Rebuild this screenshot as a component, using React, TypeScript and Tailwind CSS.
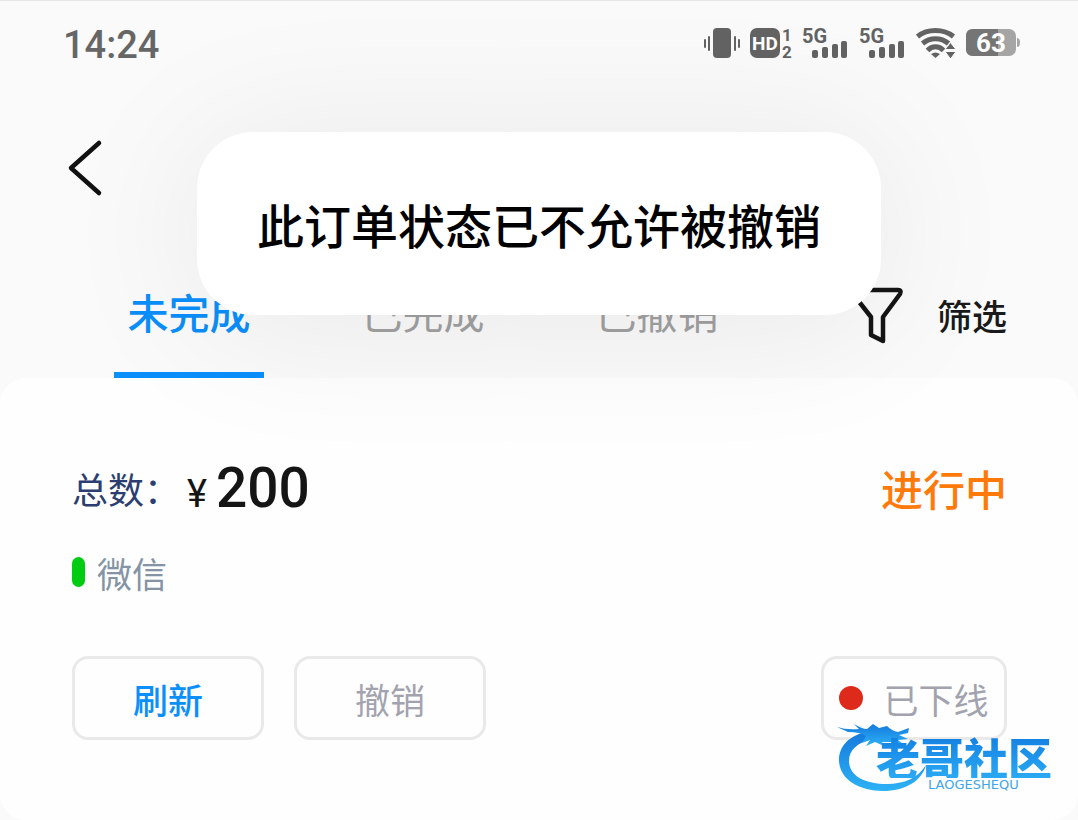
import React, { useState } from "react";

function VibrateIcon() {
  return (
    <svg width="36" height="30" viewBox="0 0 36 30" fill="#636363">
      <rect x="9" y="0" width="18" height="30" rx="4" />
      <rect x="4" y="8" width="2" height="15" rx="1" />
      <rect x="0" y="11" width="2" height="9" rx="1" />
      <rect x="30" y="8" width="2" height="15" rx="1" />
      <rect x="34" y="11" width="2" height="9" rx="1" />
    </svg>
  );
}

function HdIcon() {
  return (
    <svg
      width="44"
      height="30"
      viewBox="0 0 44 30"
      fill="#636363"
      className="overflow-visible font-['Roboto',sans-serif] font-bold"
    >
      <rect width="30" height="30" rx="7" />
      <text x="15" y="22" fontSize="19" fill="#fff" textAnchor="middle">
        HD
      </text>
      <text x="37" y="13" fontSize="17" textAnchor="middle">
        1
      </text>
      <text x="37" y="30" fontSize="17" textAnchor="middle">
        2
      </text>
    </svg>
  );
}

function SignalIcon() {
  return (
    <svg
      width="45"
      height="30"
      viewBox="0 0 45 30"
      fill="#636363"
      className="overflow-visible font-['Roboto',sans-serif] font-bold"
    >
      <text x="-2" y="15" fontSize="20">
        5G
      </text>
      <rect x="8" y="22" width="6" height="8" rx="2" />
      <rect x="18" y="19" width="6" height="11" rx="2" />
      <rect x="28" y="16" width="6" height="14" rx="2" />
      <rect x="37" y="13" width="6" height="17" rx="2" />
    </svg>
  );
}

function WifiIcon() {
  return (
    <svg width="40" height="30" viewBox="0 0 40 30" fill="none">
      <g stroke="#636363" strokeWidth="5">
        <path d="M1.500 8.500C11.500 0.500 27.500 0.500 37.500 8.500" />
        <path d="M6.500 15.500C14 9 25 9 32.500 15.500" />
        <path d="M11.500 22.500C16 17.600 23 17.600 27.500 22.500" />
      </g>
      <path d="M15 26Q19.500 22.800 24 26L19.500 30Z" fill="#636363" />
      <path
        d="M34.500 14.500L40 21.500H29ZM34.500 31L29 23.500H40Z"
        fill="#636363"
        stroke="#fafafa"
        strokeWidth="1"
      />
    </svg>
  );
}

function BatteryIcon() {
  return (
    <svg
      width="54"
      height="28"
      viewBox="0 0 54 28"
      className="font-['Roboto',sans-serif] font-bold"
    >
      <rect x="0" y="0" width="50" height="27" rx="7" fill="#a5a5a5" />
      <path d="M7 0H32V27H7Q0 27 0 20V7Q0 0 7 0Z" fill="#757575" />
      <path d="M51 9Q54 9 54 13.500Q54 18 51 18Z" fill="#a5a5a5" />
      <text x="25" y="23" fontSize="26" fill="#fff" textAnchor="middle">
        63
      </text>
    </svg>
  );
}

function StatusBar() {
  return (
    <div className="flex h-[84px] items-center justify-between pr-[58px] pl-[63px]">
      <span className="pt-[4px] font-['Roboto',sans-serif] text-[38px] leading-none font-medium text-[#666]">
        14:24
      </span>
      <div className="flex items-center gap-[10px]">
        <VibrateIcon />
        <HdIcon />
        <div className="flex gap-[12px]">
          <SignalIcon />
          <SignalIcon />
        </div>
        <WifiIcon />
        <BatteryIcon />
      </div>
    </div>
  );
}

function FilterIcon() {
  return (
    <svg
      width="56"
      height="58"
      viewBox="0 0 56 58"
      fill="none"
      stroke="#151515"
      strokeWidth="4.5"
      strokeLinejoin="round"
    >
      <path d="M7 4H50Q54 4 52 8L35 31V55L23 49V31L5 8Q3 4 7 4Z" />
    </svg>
  );
}

const tabs = ["未完成", "已完成", "已撤销"];

function Tabs() {
  const [active, setActive] = useState("未完成");

  return (
    <div className="flex h-[130px] items-stretch justify-between pr-[71px] pl-[114px]">
      <div className="flex gap-[84px]">
        {tabs.map((tab) => (
          <button
            key={tab}
            onClick={() => setActive(tab)}
            className={`w-[150px] border-b-[6px] pt-[3px] text-[41px] leading-none ${
              tab === active
                ? "border-[#0a8ffb] font-medium text-[#0a8ffb]"
                : "border-transparent text-[#a0a0a0]"
            }`}
          >
            {tab}
          </button>
        ))}
      </div>
      <button className="flex items-center gap-[33px] pt-[3px] text-[35px] leading-none font-medium text-[#1a1a1a]">
        <FilterIcon />
        筛选
      </button>
    </div>
  );
}

function Watermark() {
  return (
    <div className="pointer-events-none absolute top-[337px] right-[18px] h-[85px] w-[230px]">
      <svg
        width="110"
        height="85"
        viewBox="0 0 110 85"
        className="absolute top-0 left-0"
      >
        <defs>
          <linearGradient id="dragon" x1="0" y1="0" x2="0" y2="1">
            <stop offset="0" stopColor="#1479dd" />
            <stop offset="1" stopColor="#2db2f6" />
          </linearGradient>
        </defs>
        <g fill="url(#dragon)">
          <path d="M36 17C18 21 9 32 9 45C9 64 29 76 53 76C75 76 92 66 96 50C88 63 74 69 57 69C35 69 19 61 19 46C19 35 27 28 42 24Z" />
          <path d="M7 12Q16 15 29 14L24 9Q32 14 37 14L43 9L49 13L57 11Q62 16 68 17L79 13L78 18L69 20L78 24L68 25L73 29L62 27L52 27L54 31L45 27L36 31L40 25L32 28L36 21Q30 17 18 17Z" />
        </g>
      </svg>
      <div className="relative flex flex-col pt-[21px] pl-[46px]">
        <span className="bg-linear-to-b from-[#1580e2] to-[#2aa9f3] bg-clip-text text-[44px] leading-[42px] font-black whitespace-nowrap text-transparent">
          老哥社区
        </span>
        <span className="pl-[52px] font-['DejaVu_Sans',sans-serif] text-[13px] leading-[14px] text-[#3fa5ea]">
          LAOGESHEQU
        </span>
      </div>
    </div>
  );
}

const actionClass =
  "flex h-[84px] items-center justify-center rounded-[16px] border-[3px] border-[#e9e9e9] text-[35px] leading-none";

function OrderCard() {
  return (
    <section className="relative rounded-[26px] bg-[#fefefe] pt-[79px] pr-[71px] pb-[80px] pl-[72px]">
      <div className="flex h-[62px] items-center justify-between">
        <div className="flex items-center">
          <span className="w-[115px] text-[36px] leading-none whitespace-nowrap text-[#2c3e70]">
            总数：
          </span>
          <span className="flex items-baseline gap-[9px] font-['Roboto',sans-serif] leading-none text-[#151515]">
            <span className="text-[38px]">¥</span>
            <span className="text-[55px] font-medium">200</span>
          </span>
        </div>
        <span className="text-[42px] leading-none font-medium text-[#ff7a0a]">
          进行中
        </span>
      </div>
      <div className="mt-[31px] flex h-[44px] items-center gap-[12px] text-[35px] leading-none text-[#8494a5]">
        <span className="h-[30px] w-[13px] rounded-full bg-[#00cd12]" />
        微信
      </div>
      <div className="mt-[62px] flex gap-[30px]">
        <button className={`${actionClass} w-[192px] font-medium text-[#0a8ffb]`}>
          刷新
        </button>
        <button className={`${actionClass} w-[192px] text-[#a2a3ae]`}>撤销</button>
        <button
          className={`${actionClass} ml-auto w-[186px] gap-[20px] text-[#a2a3ae]`}
        >
          <span className="size-[24px] rounded-full bg-[#de2a1b]" />
          已下线
        </button>
      </div>
      <Watermark />
    </section>
  );
}

function Toast({ message }: { message: string }) {
  return (
    <div
      role="status"
      className="absolute top-[131px] left-1/2 flex h-[183px] -translate-x-1/2 items-center rounded-[56px] bg-white px-[60px] text-[47px] leading-none font-medium whitespace-nowrap text-black shadow-[0_8px_150px_rgba(0,0,0,0.08)]"
    >
      {message}
    </div>
  );
}

export default function App() {
  return (
    <main className="relative min-h-screen overflow-hidden border-t border-[#e6e6e6] bg-[#fafafa] font-['Noto_Sans_CJK_SC',sans-serif]">
      <StatusBar />
      <div className="flex h-[163px] items-center pt-[2px] pl-[66px]">
        <button aria-label="返回">
          <svg
            width="38"
            height="58"
            viewBox="0 0 38 58"
            fill="none"
            stroke="#111"
            strokeWidth="4.5"
            strokeLinecap="round"
            strokeLinejoin="round"
          >
            <path d="M33 4L5 29L33 54" />
          </svg>
        </button>
      </div>
      <Tabs />
      <OrderCard />
      <Toast message="此订单状态已不允许被撤销" />
    </main>
  );
}
